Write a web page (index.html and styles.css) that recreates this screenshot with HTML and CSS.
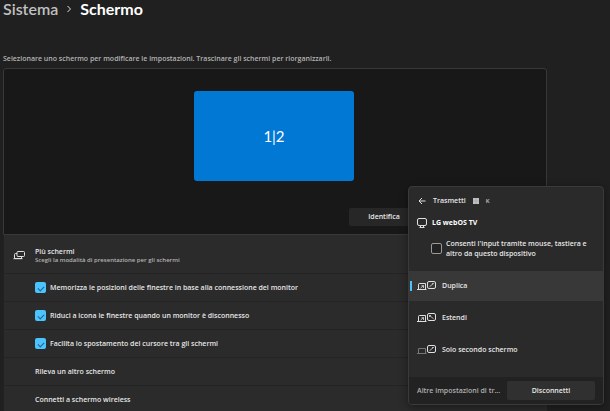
FILE: index.html
```html
<!DOCTYPE html>
<html lang="it">
<head>
  <meta charset="UTF-8">
  <meta name="viewport" content="width=device-width, initial-scale=1.0">
  <title>Schermo</title>
  <link rel="stylesheet" href="styles.css">
</head>
<body>
  <main class="settings">
    <h1 class="breadcrumb">
      <a href="#">Sistema</a>
      <svg class="chevron" viewBox="0 0 6 8"><path d="M1.5 1 4.5 4 1.5 7"/></svg>
      <span>Schermo</span>
    </h1>
    <p class="hint">Selezionare uno schermo per modificare le impostazioni. Trascinare gli schermi per riorganizzarli.</p>

    <section class="arrange">
      <button class="monitor" type="button">1|2</button>
      <button class="identify" type="button">Identifica</button>
    </section>

    <section class="card">
      <div class="card-header">
        <svg class="screens-icon" viewBox="0 0 12 12">
          <rect x="4" y="1.500" width="7.500" height="5" rx="1"/>
          <path d="M4 3.500H2.500Q1.500 3.500 1.500 4.500V8.500H8.500V6.500M0.500 8.700H9.500"/>
        </svg>
        <div>
          <h2>Più schermi</h2>
          <p>Scegli la modalità di presentazione per gli schermi</p>
        </div>
      </div>
      <label class="row"><input type="checkbox" checked>Memorizza le posizioni delle finestre in base alla connessione del monitor</label>
      <label class="row"><input type="checkbox" checked>Riduci a icona le finestre quando un monitor è disconnesso</label>
      <label class="row"><input type="checkbox" checked>Facilita lo spostamento del cursore tra gli schermi</label>
      <div class="row">Rileva un altro schermo</div>
      <div class="row">Connetti a schermo wireless</div>
    </section>
  </main>

  <aside class="flyout">
    <header class="flyout-header">
      <button class="back" type="button" aria-label="Indietro">
        <svg viewBox="0 0 8 8"><path d="M7.500 4H1M4 1 1 4 4 7"/></svg>
      </button>
      <span>Trasmetti</span>
      <svg class="win-key" viewBox="0 0 6 6"><rect width="6" height="6"/><path d="M3 0V6M0 3H6"/></svg>
      <kbd>K</kbd>
    </header>
    <div class="device">
      <svg viewBox="0 0 10 10"><rect x="0.500" y="0.500" width="9" height="7" rx="1.500"/><path d="M3.500 7.500V9M6.500 7.500V9M2.500 9.500H7.500"/></svg>
      <strong>LG webOS TV</strong>
    </div>
    <label class="allow"><input type="checkbox"><span>Consenti l'input tramite mouse, tastiera e altro da questo dispositivo</span></label>
    <div class="modes">
      <button class="mode selected" type="button">
        <svg viewBox="0 0 20 10"><path d="M8.500 8.500V2.500H2.500Q1.500 2.500 1.500 3.500V8.500M0 8.500H9.500"/><path class="thin" d="M3.500 7.200 6.500 4.500M4.500 4.700H6.500V7"/><rect x="10.500" y="0.500" width="8" height="7" rx="1.500"/><path class="thin" d="M12.500 5.700 16.500 2.500M15 2.500H16.500"/></svg>
        Duplica
      </button>
      <button class="mode" type="button">
        <svg viewBox="0 0 20 10"><path d="M8.500 8.500V2.500H2.500Q1.500 2.500 1.500 3.500V8.500M0 8.500H9.500"/><path class="thin" d="M3.500 7.200 6.500 4.500M4.500 4.700H6.500V7"/><rect x="10.500" y="0.500" width="8" height="7" rx="1.500"/><path class="thin" d="M16.500 5.700 12.500 2.500M12.500 4V2.500H14"/></svg>
        Estendi
      </button>
      <button class="mode" type="button">
        <svg viewBox="0 0 20 10"><path class="off" d="M1.500 8.500V3.500H8.500V8.500M0 8.500H9.500"/><rect x="10.500" y="0.500" width="8" height="7" rx="1.500"/><path class="thin" d="M12.500 5.700 16.500 2.500M15 2.500H16.500"/></svg>
        Solo secondo schermo
      </button>
    </div>
    <footer class="flyout-footer">
      <a href="#">Altre impostazioni di tr...</a>
      <button class="disconnect" type="button">Disconnetti</button>
    </footer>
  </aside>
</body>
</html>
```
FILE: styles.css
```css
* {
  box-sizing: border-box;
}

body {
  margin: 0;
  height: 100vh;
  overflow: hidden;
  background: #202020;
  color: #e6e6e6;
  font-family: "Open Sans", "Noto Sans", sans-serif;
  font-size: 7px;
  font-weight: 600;
  line-height: 10px;
}

h1, h2, p {
  margin: 0;
}

button {
  border: 0;
  padding: 0;
  background: none;
  color: inherit;
  font: inherit;
}

a {
  color: inherit;
  text-decoration: none;
}

svg {
  flex: none;
  fill: none;
  stroke: #e0e0e0;
  stroke-width: 1;
}

.settings {
  padding-left: 3px;
  margin-right: 63px;
}

.breadcrumb {
  display: flex;
  align-items: center;
  gap: 8px;
  height: 18px;
  margin-bottom: 36px;
  color: #fff;
  font-family: Lato, "Open Sans", sans-serif;
  font-size: 16px;
  font-weight: 700;
  line-height: 18px;
}

.breadcrumb a {
  color: #c0c0c0;
  font-weight: 600;
}

.chevron {
  width: 6px;
  height: 8px;
}

.hint {
  margin-bottom: 4px;
  color: #b4b4b4;
}

.arrange {
  display: flex;
  flex-direction: column;
  align-items: center;
  justify-content: space-between;
  height: 167px;
  padding: 22px 10px 8px 8px;
  border: 1px solid #383838;
  border-radius: 3px 3px 0 0;
  background: #181818;
}

.monitor {
  width: 160px;
  height: 90px;
  border-radius: 3px;
  background: #0078d4;
  color: #fff;
  font-family: Lato, "Open Sans", sans-serif;
  font-size: 15px;
  font-weight: 400;
}

.identify {
  width: 70px;
  height: 18px;
  margin-left: 220px;
  border-radius: 2px;
  background: #272727;
}

.card {
  background: #2b2b2b;
  border-left: 1px solid #222;
}

.card-header {
  display: flex;
  align-items: center;
  gap: 10px;
  height: 38px;
  padding: 3px 0 0 9px;
}

.card-header h2 {
  font-size: 7px;
  font-weight: 600;
  line-height: 9px;
}

.card-header p {
  color: #b4b4b4;
  font-size: 6px;
  line-height: 9px;
}

.screens-icon {
  width: 12px;
  height: 12px;
}

.row {
  display: flex;
  align-items: center;
  gap: 4px;
  height: 28px;
  padding-left: 31px;
  border-top: 1px solid #242424;
}

input[type="checkbox"] {
  flex: none;
  appearance: none;
  width: 11px;
  height: 11px;
  margin: 0;
  border: 1px solid #9a9a9a;
  border-radius: 2px;
  background: #222;
}

input[type="checkbox"]:checked {
  display: grid;
  place-items: center;
  border: 0;
  background: #4cc2ff;
}

input[type="checkbox"]:checked::before {
  content: "";
  width: 5px;
  height: 3px;
  border: solid #1f6488;
  border-width: 0 0 1px 1px;
  transform: rotate(-45deg);
}

/* cast panel, floats over the settings page */
.flyout {
  position: absolute;
  right: 6px;
  bottom: 6px;
  width: 196px;
  border: 1px solid #3a3a3a;
  border-radius: 4px;
  background: #2a2a2a;
  box-shadow: 0 2px 8px rgba(0, 0, 0, 0.4);
  overflow: hidden;
}

.flyout-header {
  display: flex;
  align-items: center;
  gap: 7px;
  height: 27px;
  padding-left: 9px;
}

.back {
  display: flex;
}

.back svg {
  width: 8px;
  height: 8px;
}

.win-key {
  width: 6px;
  height: 6px;
}

.win-key rect {
  fill: #c0c0c0;
  stroke: none;
}

.win-key path {
  stroke: #999;
  stroke-width: 0.5;
}

kbd {
  color: #c0c0c0;
  font-family: inherit;
  font-size: 6px;
}

.device {
  display: flex;
  align-items: center;
  gap: 5px;
  height: 18px;
  padding-left: 8px;
}

.device svg {
  width: 10px;
  height: 10px;
}

.device strong {
  color: #fff;
  font-weight: 700;
}

.allow {
  display: flex;
  align-items: center;
  gap: 4px;
  height: 39px;
  padding: 0 8px 6px 22px;
}

.mode {
  display: flex;
  align-items: center;
  gap: 5px;
  width: 100%;
  height: 30px;
  margin-bottom: 2px;
  padding-left: 8px;
}

.mode svg {
  width: 20px;
  height: 10px;
}

.mode .thin {
  stroke-width: 0.8;
}

.mode .off {
  stroke: #777;
}

.mode.selected {
  background: linear-gradient(#4cc2ff, #4cc2ff) 1px center / 2px 10px no-repeat #383838;
}

.flyout-footer {
  display: flex;
  align-items: center;
  justify-content: space-between;
  height: 27px;
  margin-top: 12px;
  padding: 0 8px;
  background: #222;
}

.flyout-footer a {
  color: #b0b0b0;
}

.disconnect {
  width: 88px;
  height: 19px;
  border-radius: 2px;
  background: #303030;
}
```
